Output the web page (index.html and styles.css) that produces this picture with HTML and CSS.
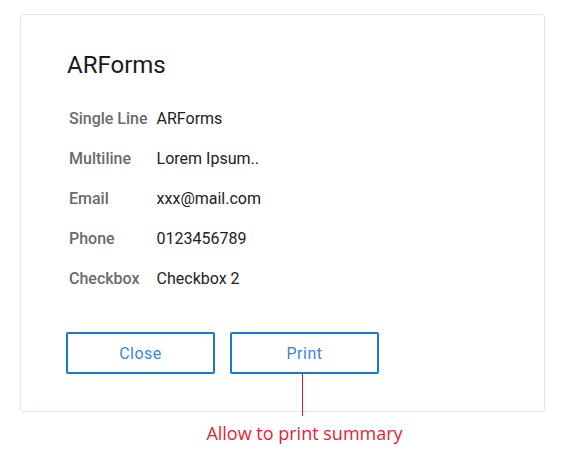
FILE: index.html
```html
<!DOCTYPE html>
<html>
<head>
<meta charset="utf-8">
<link rel="stylesheet" href="styles.css">
</head>
<body>
<div class="card">
  <h1 class="title">ARForms</h1>
  <div class="fields">
    <div class="label">Single Line</div><div class="value">ARForms</div>
    <div class="label">Multiline</div><div class="value">Lorem Ipsum..</div>
    <div class="label">Email</div><div class="value">xxx@mail.com</div>
    <div class="label">Phone</div><div class="value">0123456789</div>
    <div class="label">Checkbox</div><div class="value">Checkbox 2</div>
  </div>
  <div class="actions">
    <button class="btn">Close</button>
    <div class="print-wrap">
      <button class="btn">Print</button>
      <div class="callout-line"></div>
    </div>
  </div>
</div>
<div class="note">
  <p class="note-text">Allow to print summary</p>
</div>
</body>
</html>
```

FILE: styles.css
```css
html, body {
  margin: 0;
  padding: 0;
  background: #ffffff;
}
body {
  padding: 14px 0 0 20px;
  font-family: Roboto, "Liberation Sans", sans-serif;
}
.card {
  width: 523px;
  height: 396px;
  box-sizing: content-box;
  border: 1px solid #dfe6f4;
  border-radius: 3px;
  padding: 0;
}
.title {
  margin: 36px 0 0 46px;
  font-size: 24px;
  line-height: 28px;
  font-weight: 400;
  color: #1b1b1b;
}
.fields {
  margin: 20px 0 0 48px;
  display: grid;
  grid-template-columns: auto 1fr;
  grid-auto-rows: 40px;
  column-gap: 9px;
  align-items: center;
  font-size: 16px;
  line-height: 20px;
}
.label {
  font-weight: 500;
  color: #6b6b6b;
}
.value {
  color: #222;
}
.actions {
  display: flex;
  gap: 15px;
  margin: 33px 0 0 45px;
}
.print-wrap {
  position: relative;
}
.btn {
  display: block;
  width: 149px;
  height: 42px;
  box-sizing: border-box;
  border: 2px solid #1679d2;
  border-radius: 2px;
  background: #fff;
  color: #3c85d9;
  font-family: Roboto, "Liberation Sans", sans-serif;
  font-size: 16px;
  letter-spacing: 0.5px;
  padding: 0;
}
.callout-line {
  position: absolute;
  left: 72px;
  top: 42px;
  width: 1px;
  height: 42px;
  background: #c8242f;
}
.note {
  display: flex;
  justify-content: center;
  width: 149px;
  margin: 9px 0 0 210px;
}
.note-text {
  margin: 0;
  white-space: nowrap;
  font-family: "Open Sans", sans-serif;
  font-size: 18px;
  line-height: 24px;
  color: #ec1c2c;
}
```
